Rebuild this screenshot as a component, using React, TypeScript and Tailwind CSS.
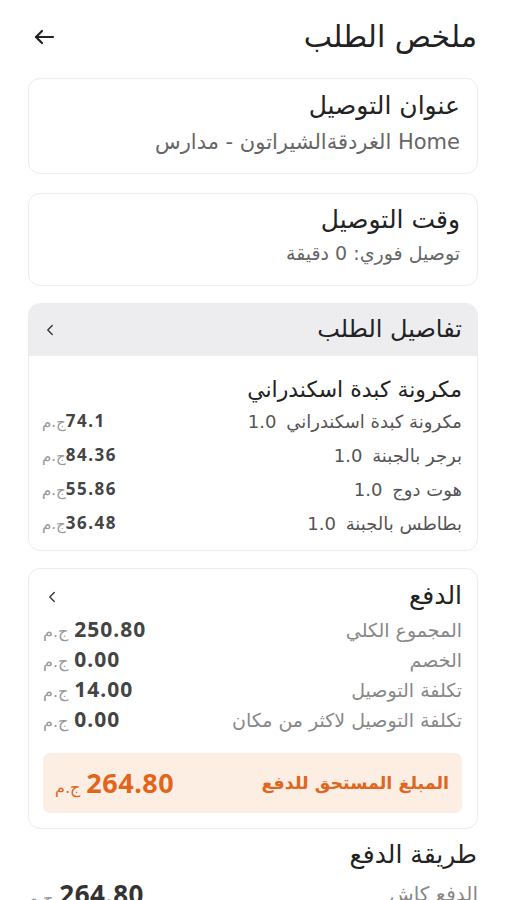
import { ChevronLeft } from "lucide-react";

const items = [
  { name: "مكرونة كبدة اسكندراني", qty: "1.0", price: "74.1" },
  { name: "برجر بالجبنة", qty: "1.0", price: "84.36" },
  { name: "هوت دوج", qty: "1.0", price: "55.86" },
  { name: "بطاطس بالجبنة", qty: "1.0", price: "36.48" },
];

const payments = [
  { label: "المجموع الكلي", value: "250.80" },
  { label: "الخصم", value: "0.00" },
  { label: "تكلفة التوصيل", value: "14.00" },
  { label: "تكلفة التوصيل لاكثر من مكان", value: "0.00" },
];

const font = { fontFamily: '"DejaVu Sans", "Noto Sans", sans-serif' };
const num = { fontFamily: '"Noto Sans", "DejaVu Sans", sans-serif' };

const App = () => {
  return (
    <div dir="rtl" className="w-[506px] min-h-[900px] bg-white text-[#222] overflow-hidden" style={font}>
      {/* Header */}
      <div className="flex items-center justify-between pr-[29px] pl-[32px] h-[78px] pb-[4px]">
        <h1 className="text-[30px] leading-none text-[#222]">ملخص الطلب</h1>
        <svg width="24" height="24" viewBox="0 0 24 24" fill="none" stroke="#222" strokeWidth="2.2" strokeLinecap="round" strokeLinejoin="round">
          <path d="M21 12H4" />
          <path d="M10 6l-6 6 6 6" />
        </svg>
      </div>

      <div className="flex flex-col px-[28px]">
        {/* Delivery address */}
        <div className="rounded-[12px] border border-[#ececec] px-[17px] pt-[13px] h-[96px]">
          <div className="text-[25px] leading-[28px]">عنوان التوصيل</div>
          <div className="text-[21px] leading-[24px] mt-[10px] text-[#666]">Home الغردقةالشيراتون - مدارس</div>
        </div>

        {/* Delivery time */}
        <div className="rounded-[12px] border border-[#ececec] px-[17px] pt-[12px] h-[93px] mt-[19px]">
          <div className="text-[25px] leading-[28px]">وقت التوصيل</div>
          <div className="text-[19px] leading-[24px] mt-[7px] text-[#666]">توصيل فوري: 0 دقيقة</div>
        </div>

        {/* Order details */}
        <div className="rounded-[12px] border border-[#ececec] overflow-hidden mt-[17px]">
          <div className="flex items-center justify-between bg-[#ededf0] h-[52px] pr-[15px] pl-[12px]">
            <div className="text-[24px] leading-none mb-[3px]">تفاصيل الطلب</div>
            <ChevronLeft size={18} strokeWidth={1.8} color="#333" />
          </div>
          <div className="pr-[15px] pl-[13px] pt-[20px] pb-[10px]">
            <div className="text-[22px] leading-[28px]">مكرونة كبدة اسكندراني</div>
            {items.map((it) => (
              <div key={it.name} className="flex items-center justify-between h-[34px]">
                <div className="text-[18px] text-[#555]">
                  {it.name} <span className="mr-[4px]">{it.qty}</span>
                </div>
                <div dir="ltr" className="flex items-baseline">
                  <span className="text-[15px] text-[#999]">ج.م</span>
                  <span className="text-[17px] font-bold text-[#444] tracking-[1.5px]" style={num}>{it.price}</span>
                </div>
              </div>
            ))}
          </div>
        </div>

        {/* Payment */}
        <div className="rounded-[12px] border border-[#ececec] mt-[17px] pr-[15px] pl-[14px] pt-[10px] pb-[15px]">
          <div className="flex items-center justify-between h-[32px] mb-[4px]">
            <div className="text-[25px] leading-none">الدفع</div>
            <ChevronLeft size={18} strokeWidth={1.8} color="#333" className="mt-[4px]" />
          </div>
          {payments.map((p) => (
            <div key={p.label} className="flex items-center justify-between h-[30px]">
              <div className="text-[19px] text-[#888]">{p.label}</div>
              <div dir="ltr" className="flex items-baseline gap-[6px]">
                <span className="text-[16px] text-[#999]">ج.م</span>
                <span className="text-[21px] font-bold text-[#444] tracking-[1px]" style={num}>{p.value}</span>
              </div>
            </div>
          ))}
          <div className="flex items-center justify-between bg-[#fdeee4] rounded-[7px] h-[60px] mt-[18px] pr-[13px] pl-[12px]">
            <div className="text-[17.5px] font-semibold text-[#e0661e]">المبلغ المستحق للدفع</div>
            <div dir="ltr" className="flex items-baseline gap-[6px]">
              <span className="text-[16px] text-[#e0661e]">ج.م</span>
              <span className="text-[27px] font-bold text-[#e0661e] tracking-[0.5px]" style={num}>264.80</span>
            </div>
          </div>
        </div>

        {/* Payment method */}
        <div className="mt-[10px]">
          <div className="text-[25px] leading-[32px] pr-[1px]">طريقة الدفع</div>
          <div className="flex items-center justify-between h-[40px] mt-[3px]">
            <div className="text-[20px] text-[#888]">الدفع كاش</div>
            <div dir="ltr" className="flex items-baseline gap-[6px]">
              <span className="text-[16px] text-[#999]">ج.م</span>
              <span className="text-[26px] font-bold text-[#333] tracking-[0.5px]" style={num}>264.80</span>
            </div>
          </div>
        </div>
      </div>
    </div>
  );
};

export default App;
